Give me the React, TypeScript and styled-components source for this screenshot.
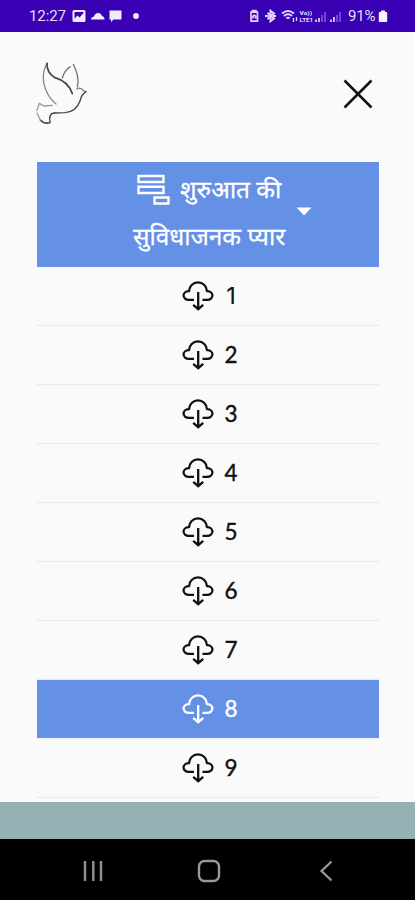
import React from "react";
import styled, { createGlobalStyle } from "styled-components";

const GlobalStyle = createGlobalStyle`
  * { box-sizing: border-box; }
  body { margin: 0; background: #fafafa; font-family: "Noto Sans", sans-serif; }
`;

const Screen = styled.div`
  width: 415px;
  height: 900px;
  display: flex;
  flex-direction: column;
  overflow: hidden;
  background: #fafafa;
`;

const StatusBar = styled.div`
  flex: none;
  height: 32px;
  padding: 0 27px 0 29px;
  display: flex;
  align-items: center;
  justify-content: space-between;
  background: #3a00b3;
  color: #e8dcfb;
  font: 400 15px Roboto, sans-serif;
`;

const Clock = styled.span`
  width: 38px;
  font-size: 15px;
  letter-spacing: -0.1px;
`;

const StatusGroup = styled.div`
  display: flex;
  align-items: center;
  height: 32px;
`;

const Percent = styled.span`
  width: 30px;
  font-size: 15px;
  letter-spacing: -0.2px;
`;

const Header = styled.header`
  flex: none;
  height: 129.5px;
  padding: 0 41px 5.5px 25px;
  display: flex;
  align-items: center;
  justify-content: space-between;
`;

const CloseButton = styled.button`
  width: 32px;
  height: 32px;
  padding: 0;
  border: 0;
  background: none;
  display: flex;
`;

const Content = styled.main`
  flex: none;
  height: 640.5px;
  padding: 0 36px 0 37px;
  overflow: hidden;
`;

const BookHeader = styled.div`
  height: 105px;
  padding-left: 96px;
  display: flex;
  align-items: center;
  background: #6490e6;
  color: #fff;
`;

const BookTitle = styled.div`
  width: 154px;
  display: flex;
  flex-direction: column;
`;

const TitleLine = styled.div<{ $indent?: number }>`
  height: 47px;
  padding-left: ${(p) => p.$indent ?? 0}px;
  display: flex;
  align-items: center;
  white-space: nowrap;
  font: 400 24.4px/47px "Noto Sans", "Noto Sans Devanagari", sans-serif;
  -webkit-text-stroke: 0.3px #fff;
`;

const TitleText = styled.span<{ $gap?: number }>`
  margin: -4px 0 0 ${(p) => p.$gap ?? 0}px;
`;

const BlocksSvg = styled.svg`
  flex: none;
  margin-top: -3px;
`;

const Caret = styled.svg`
  flex: none;
  margin: 0 0 6px 9px;
`;

const ChapterList = styled.div`
  padding-top: 0.5px;
`;

const ChapterRow = styled.div<{ $active: boolean }>`
  height: 59px;
  padding-left: 145px;
  display: flex;
  align-items: center;
  gap: 9px;
  border-bottom: 1px solid ${(p) => (p.$active ? "#eef1f8" : "#e9e9e9")};
  background: ${(p) => (p.$active ? "#6490e6" : "transparent")};
  background-clip: padding-box;
  color: ${(p) => (p.$active ? "#fff" : "#111")};
`;

const ChapterNumber = styled.span<{ $plainStem: boolean }>`
  width: 16px;
  text-align: center;
  font-family: ${(p) => (p.$plainStem ? "Inter, sans-serif" : "Lato, sans-serif")};
  font-weight: 400;
  font-size: 22.5px;
  line-height: 1;
  -webkit-text-stroke: ${(p) => (p.$plainStem ? 0.2 : 0.4)}px currentColor;
`;

const Banner = styled.div`
  flex: none;
  height: 37px;
  background: #95b1b3;
`;

const NavBar = styled.nav`
  flex: 1;
  padding: 2px 79px 0 82px;
  display: flex;
  align-items: center;
  justify-content: space-between;
  background: #000;
`;

const StatusIcons = () => (
  <svg width="72" height="16" viewBox="0 0 72 16" fill="#f2ebff">
    <path fillRule="evenodd" d="M7 2h10q1.500 0 1.500 1.500v9q0 1.500-1.500 1.500H7q-1.500 0-1.500-1.500v-9Q5.500 2 7 2ZM7.500 4v6.500l3-3 2 2L16.500 5V4Z" />
    <path d="M24 11.500q0-2.500 3-3 1-3.500 4-3.500t4 3q2.500.5 2.500 3.500Z" />
    <path d="M42.500 2.500h12v9h-8L44 14v-2.500h-1.500Z" />
    <circle cx="69" cy="8" r="2.900" />
  </svg>
);

const SignalIcons = () => (
  <svg width="100" height="18" viewBox="0 0 100 18" fill="none" stroke="#e3d5fc">
    <path d="M3 5.200h6.500v9H3ZM4.500 4.500V3.500h3.500v1M5 11.500V9.200l1.300-1 1.300 1v2.300" strokeWidth="1.700" />
    <path d="M19.500 6l6.500 5.500-3.500 2.700V3.800L26 6.500 19.500 12" strokeWidth="2" />
    <path d="M17 9h3.500M25 9h3" strokeWidth="2" />
    <path d="M34 6.500q6-5 12 0M36 9q4-3.300 8 0M38.300 11.300q1.700-1.300 3.400 0" strokeWidth="1.900" />
    <path d="M45.500 11v4M48.500 10v4" strokeWidth="1.300" />
    <g fill="#e3d5fc" stroke="none" fontFamily="Roboto, sans-serif" fontSize="6" fontWeight="800">
      <text x="51.500" y="7.700" textLength="12.500" lengthAdjust="spacingAndGlyphs">Vo))</text>
      <text x="51.500" y="15.200" textLength="13.500" lengthAdjust="spacingAndGlyphs">LTE1</text>
    </g>
    <path d="M68 12.500V15M71 11v4M83 12.500V15M86 10v5" strokeWidth="1.700" />
    <path d="M74 8v7M77 5v10M89 8v7M92 5v10" strokeWidth="1.700" opacity=".4" />
  </svg>
);

const Battery = () => (
  <svg width="10" height="14" viewBox="0 0 10 14" fill="#f7f2ff">
    <path d="M3 1.500h4V3h1.500q.7 0 .7.700V12q0 1-.7 1h-7q-.7 0-.7-1V3.700Q.8 3 1.500 3H3Z" />
  </svg>
);

const Dove = () => (
  <svg width="75" height="80" viewBox="0 0 225 240" fill="none" stroke="#444" strokeWidth="4" strokeLinecap="round" strokeLinejoin="round">
    <path d="M66 28Q51 53 56 86 65 128 93 150" stroke="#888" />
    <path d="M66 28Q65 56 88 70 130 82 142 119" strokeWidth="5" />
    <path d="M112 72Q119 48 136 38" stroke="#777" />
    <path d="M145 31Q164 67 157 99" stroke="#777" />
    <path d="M155 105Q169 99 175 110L183 113" stroke="#888" />
    <path d="M183 113Q168 123 166 139 154 174 120 176L88 177" />
    <path d="M88 177Q70 178 75 206 57 211 46 198" strokeWidth="4.500" />
    <path d="M46 198L36 177M36 169L43 148 57 156 82 154" stroke="#999" />
  </svg>
);

const BlocksIcon = () => (
  <BlocksSvg width="33" height="31" viewBox="0 0 33 31" fill="none" stroke="#fff" strokeWidth="2.400">
    <path d="M1.500 2h25v6h-25ZM1.500 12.700h25v6.300h-25ZM17.500 23.500h14v6h-14Z" />
  </BlocksSvg>
);

const CloudDownload = () => (
  <svg width="32" height="31" viewBox="0 0 32 31" fill="none" stroke="currentColor" strokeWidth="2.300">
    <path d="M12 18.900H6.800a5.400 4.400 0 0 1 .3-8.800A8.900 8.700 0 0 1 24.900 10.100a5.400 4.400 0 0 1 .3 8.800h-4.700" strokeLinejoin="round" />
    <path d="M16.200 11V28M11.200 23.900l5 4.300 5-4.300" />
  </svg>
);

const chapters = [1, 2, 3, 4, 5, 6, 7, 8, 9];

export default function App() {
  return (
    <>
      <GlobalStyle />
      <Screen>
        <StatusBar>
          <StatusGroup>
            <Clock>12:27</Clock>
            <StatusIcons />
          </StatusGroup>
          <StatusGroup>
            <SignalIcons />
            <Percent>91%</Percent>
            <Battery />
          </StatusGroup>
        </StatusBar>
        <Header>
          <Dove />
          <CloseButton aria-label="Close">
            <svg width="32" height="32" viewBox="0 0 32 32" fill="none" stroke="#111" strokeWidth="2.500">
              <path d="M2.500 2.500l27 27M29.500 2.500l-27 27" />
            </svg>
          </CloseButton>
        </Header>
        <Content>
          <BookHeader>
            <BookTitle>
              <TitleLine $indent={4}>
                <BlocksIcon />
                <TitleText $gap={10}>शुरुआत की</TitleText>
              </TitleLine>
              <TitleLine>
                <TitleText>सुविधाजनक प्यार</TitleText>
              </TitleLine>
            </BookTitle>
            <Caret width="16" height="9" viewBox="0 0 16 9" fill="#fff">
              <path d="M.5.500h15L8 8.500Z" />
            </Caret>
          </BookHeader>
          <ChapterList>
            {chapters.map((n) => (
              <ChapterRow key={n} $active={n === 8}>
                <CloudDownload />
                <ChapterNumber $plainStem={n === 1}>{n}</ChapterNumber>
              </ChapterRow>
            ))}
          </ChapterList>
        </Content>
        <Banner />
        <NavBar>
          <svg width="22" height="22" viewBox="0 0 22 22" stroke="#8d8d8d" strokeWidth="2.500">
            <path d="M3 1v20M11.300 1v20M19 1v20" />
          </svg>
          <svg width="24" height="24" viewBox="0 0 24 24" fill="none" stroke="#999" strokeWidth="2.400">
            <rect x="2" y="2" width="20" height="20" rx="5.500" />
          </svg>
          <svg width="22" height="22" viewBox="0 0 22 22" fill="none" stroke="#999" strokeWidth="2.300">
            <path d="M17.500 1.500L7.500 11l10 9.500" />
          </svg>
        </NavBar>
      </Screen>
    </>
  );
}
